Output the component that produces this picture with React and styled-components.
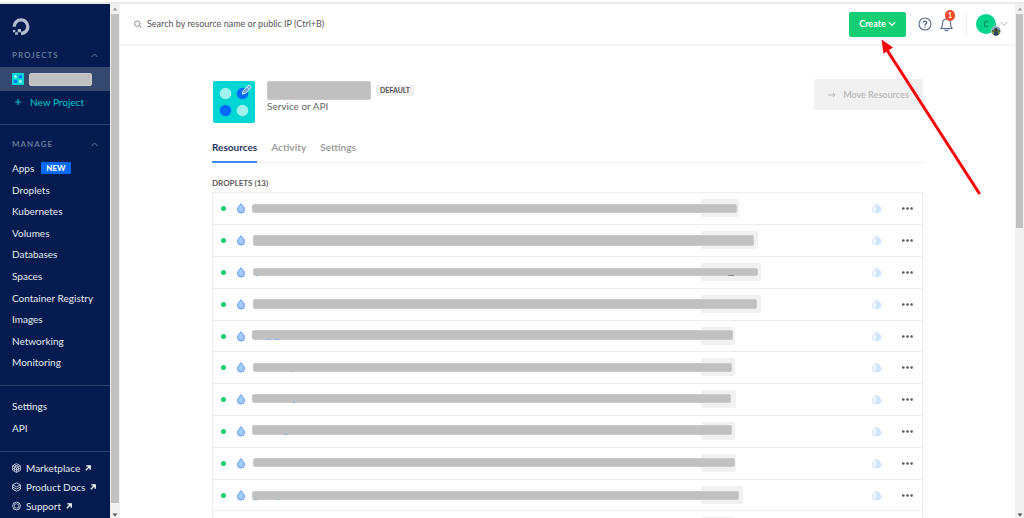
import React from "react";
import styled, { createGlobalStyle } from "styled-components";

const GlobalStyle = createGlobalStyle`
  *, *::before, *::after { box-sizing: border-box; }
  body {
    margin: 0;
    background: #fff;
    color: #5b5b5b;
    font-family: Lato, "Open Sans", "Liberation Sans", sans-serif;
    font-size: 10px;
    line-height: 16px;
  }
  button, input { font: inherit; }
  a { color: inherit; text-decoration: none; }
  ul { list-style: none; margin: 0; padding: 0; }
  h1, h2, p { margin: 0; font-size: inherit; }
`;

const Shell = styled.div`
  position: relative;
  display: flex;
  height: 100vh;
  overflow: hidden;
  border-top: 2px solid #fff;
  box-shadow: inset 0 2px 0 #e9e9e9;
  padding-top: 2px;
`;

const Sidebar = styled.aside`
  flex: 0 0 110px;
  overflow: hidden;
  background: #031b4e;
  color: #e6e9ef;
`;

const LogoLink = styled.a`
  display: block;
  height: 18px;
  margin: 14px 12px 11px;
  svg { display: block; }
`;

const NavHeading = styled.button`
  display: flex;
  align-items: center;
  justify-content: space-between;
  width: 100%;
  height: 16px;
  padding: 0 12px;
  border: 0;
  background: none;
  color: #67779a;
  font-size: 8px;
  font-weight: 700;
  letter-spacing: 1px;
  text-transform: uppercase;
`;

const ProjectLink = styled.a`
  display: flex;
  align-items: center;
  gap: 5px;
  height: 24px;
  margin-top: 4px;
  padding: 0 12px;
  background: #35486f;
`;

const Redacted = styled.span`
  display: block;
  width: ${(p) => p.$width}px;
  height: ${(p) => p.$height}px;
  border: 1px solid #cbcbcb;
  border-radius: 2px;
  background: #c0c0c0;
`;

const NewProject = styled.a`
  display: flex;
  align-items: center;
  gap: 8px;
  height: 22px;
  padding: 0 14px;
  color: #00c7cb;
`;

const Divider = styled.hr`
  height: 1px;
  margin: ${(p) => p.$before}px 0 ${(p) => p.$after}px;
  border: 0;
  background: #27406c;
`;

const NavList = styled.ul`
  display: grid;
  grid-auto-rows: 22px 21px 22px 21px 22px;
  padding: 0 12px;
  margin-top: ${(p) => p.$top || 0}px;
  a { display: flex; align-items: center; gap: 7px; height: 100%; white-space: nowrap; }
`;

const NewBadge = styled.span`
  padding: 0 5px;
  border-radius: 1px;
  background: #0069ff;
  color: #fff;
  font-size: 8px;
  font-weight: 900;
  line-height: 12px;
`;

const ResourceList = styled.ul`
  padding: 0 12px;
  a { display: flex; align-items: center; gap: 5px; height: 19px; white-space: nowrap; }
`;

const ScrollTrack = styled.div`
  display: flex;
  flex: 0 0 ${(p) => p.$width}px;
  flex-direction: column;
  align-items: center;
  padding: 3px 1px 1px;
  background: #f0f0f0;
  svg { flex: none; display: block; }
`;

const ScrollThumb = styled.div`
  align-self: stretch;
  flex: 0 0 ${(p) => p.$size};
  margin: 3px 0 auto;
  background: #c1c1c1;
`;

const Main = styled.main`
  flex: 1;
  min-width: 0;
`;

const TopBar = styled.header`
  display: flex;
  align-items: center;
  height: 41px;
  padding: 0 7px 0 14px;
  border-bottom: 1px solid #f3f3f3;
  box-shadow: 0 1px 2px #f6f6f6;
`;

const Search = styled.label`
  display: flex;
  flex: 1;
  align-items: center;
  gap: 5px;
  font-size: 9px;
  input {
    flex: 1;
    min-width: 0;
    padding: 0;
    border: 0;
    outline: 0;
    background: none;
    color: #555;
  }
  input::placeholder { color: #555; opacity: 1; }
`;

const CreateButton = styled.button`
  display: flex;
  align-items: center;
  justify-content: center;
  gap: 2px;
  width: 57px;
  height: 25px;
  padding: 0;
  border: 0;
  border-radius: 2px;
  background: #15cd72;
  color: #fff;
  font-size: 9px;
  font-weight: 700;
`;

const IconButton = styled.button`
  position: relative;
  display: flex;
  margin-left: ${(p) => p.$gap}px;
  padding: 0;
  border: 0;
  background: none;
`;

const AlertCount = styled.span`
  position: absolute;
  top: -7px;
  right: -2px;
  width: 10px;
  height: 11px;
  border-radius: 5px;
  background: #ee4b2f;
  color: #fff;
  font-size: 7px;
  font-weight: 700;
  line-height: 11px;
  text-align: center;
`;

const BarSeparator = styled.span`
  width: 1px;
  height: 23px;
  margin-left: 13px;
  background: #efefef;
`;

const Account = styled.button`
  display: flex;
  align-items: center;
  gap: 4px;
  margin-left: 9px;
  padding: 0;
  border: 0;
  background: none;
`;

const Avatar = styled.span`
  position: relative;
  width: 20px;
  height: 20px;
  border-radius: 50%;
  background: #00d68b;
  color: #0a5c47;
  font-size: 7px;
  line-height: 20px;
  text-align: center;
  svg { position: absolute; right: -5px; bottom: -2px; }
`;

const Content = styled.div`
  max-width: 711px;
  margin: 0 auto;
  padding-top: 34px;
`;

const ProjectHeader = styled.section`
  display: flex;
  align-items: flex-start;
  height: 52px;
`;

const ProjectIcon = styled.div`
  display: flex;
  margin: 2px 12px 0 1px;
`;

const ProjectInfo = styled.div`
  flex: 1;
  padding-top: 2px;
  p { line-height: 12px; color: #676767; }
`;

const TitleLine = styled.div`
  display: flex;
  align-items: center;
  gap: 5px;
`;

const DefaultTag = styled.span`
  padding: 0 4px;
  border-radius: 2px;
  background: #efefef;
  color: #5b5b5b;
  font-size: 7px;
  font-weight: 700;
  line-height: 11px;
`;

const MoveButton = styled.button`
  display: flex;
  align-items: center;
  justify-content: center;
  gap: 7px;
  width: 109px;
  height: 31px;
  padding: 0;
  border: 0;
  border-radius: 2px;
  background: #f1f1f1;
  color: #bdbdbd;
  font-size: 9px;
  font-weight: 700;
`;

const Tabs = styled.nav`
  display: flex;
  gap: 14px;
  height: 32px;
  box-shadow: inset 0 -1px 0 #f1f1f1;
`;

const Tab = styled.a`
  padding-top: 8px;
  border-bottom: 2px solid ${(p) => (p.$active ? "#3c86fb" : "transparent")};
  color: ${(p) => (p.$active ? "#1f3561" : "#a0a0a0")};
  font-weight: 700;
`;

const ListHeading = styled.h2`
  margin: 12px 0 1px;
  font-size: 8px;
  line-height: 16px;
`;

const DropletList = styled.ul`
  display: grid;
  grid-auto-rows: 32px 32px 32px 32px 31px;
  border: 1px solid #ededed;
`;

const DropletRow = styled.li`
  display: grid;
  grid-template-columns: 6px 8px 1fr 21px 11px;
  column-gap: 10px;
  align-items: center;
  padding: 0 9px 0 8px;
  border-bottom: 1px solid #ececec;
`;

const StatusDot = styled.span`
  width: 5px;
  height: 5px;
  border-radius: 50%;
  background: #15cd72;
`;

const NameCell = styled.div`
  display: grid;
  align-self: start;
  height: 31px;
  margin-left: -3px;
  > * { grid-area: 1 / 1; }
`;

const IpTag = styled.span`
  width: ${(p) => p.$width}px;
  height: 18px;
  margin: 6px 0 0 449px;
  border-radius: 2px;
  background: #f1f1f1;
`;

const NameBar = styled(Redacted)`
  position: relative;
  margin: ${(p) => p.$top}px 0 0 ${(p) => p.$inset || 0}px;
`;

const Descender = styled.i`
  position: absolute;
  top: 100%;
  left: ${(p) => p.$at}px;
  width: ${(p) => p.$width}px;
  height: 1px;
  background: ${(p) => p.$color || "#7aaef8"};
`;

const RowButton = styled.button`
  display: flex;
  padding: 0;
  border: 0;
  background: none;
`;

const Pointer = styled.svg`
  position: absolute;
  top: 37px;
  right: 42px;
  pointer-events: none;
`;

const Chevron = ({ color, width = 1 }) => (
  <svg width="8" height="6" viewBox="0 0 8 6" fill="none" stroke={color} strokeWidth={width}>
    <path d="M.8 1.200 4 4.400 7.200 1.200" />
  </svg>
);

const ChevronUp = () => (
  <svg width="7" height="5" viewBox="0 0 7 5" fill="none" stroke="#67779a">
    <path d="M.5 4 3.5 1 6.5 4" />
  </svg>
);

const Triangle = ({ down, color }) => (
  <svg width="6" height="4" viewBox="0 0 6 4" fill={color}>
    <path d={down ? "M.5 .5h5L3 3.5z" : "M.5 3.5h5L3 .5z"} />
  </svg>
);

const ProjectGlyph = ({ size, edit }) => (
  <svg width={size} height={size} viewBox="0 0 42 42">
    <rect width="42" height="42" rx="2" fill="#00d7d2" />
    <circle cx="12.500" cy="12.500" r="5.800" fill="#a0f2ec" />
    <circle cx="29.500" cy="12.500" r="5.800" fill="#0069ff" />
    <circle cx="12.500" cy="29.500" r="5.800" fill="#0069ff" />
    <circle cx="29.500" cy="29.500" r="5.800" fill="#a0f2ec" />
    {edit && (
      <g fill="#6fa5d6" stroke="#e6f3fb" strokeWidth="1" strokeLinejoin="round">
        <path d="M29.200 13.200 30.200 9.600 35 4.800a1.300 1.300 0 0 1 2 0l.5.5a1.300 1.300 0 0 1 0 2L32.700 12.100z" />
        <path d="M34 5.800l2.500 2.500" strokeWidth=".7" />
      </g>
    )}
  </svg>
);

const Logo = () => (
  <svg width="18" height="18" viewBox="0 0 18 18">
    <path d="M9 15.500A6.800 6.800 0 1 0 2.200 8.700" fill="none" stroke="#b4bdcd" strokeWidth="3.400" />
    <path d="M5.700 10.900H9v3.400H5.700zM3.200 14.200h2.600v2.600H3.200zM1 12h2.300v2.200H1z" fill="#b4bdcd" />
  </svg>
);

const ExternalArrow = () => (
  <svg width="6" height="6" viewBox="0 0 6 6" fill="none" stroke="#fff" strokeWidth="1.300">
    <path d="M.8 5.200 5 1M1.300 .9h3.900v3.900" />
  </svg>
);

const CubeIcon = () => (
  <svg width="9" height="10" viewBox="0 0 9 10" fill="none" stroke="#d0d6e2" strokeWidth=".8" strokeLinejoin="round">
    <path d="M4.500 .6 8.400 2.700v4.600L4.500 9.400.6 7.300V2.700zM.6 2.700l3.900 2.200 3.900-2.200M4.500 4.900v4.500M2.500 1.700l3.900 2.100v4.500M6.500 1.700 2.600 3.800v4.500M.6 5l3.900 2.200L8.400 5" />
  </svg>
);

const LayersIcon = () => (
  <svg width="9" height="10" viewBox="0 0 9 10" fill="none" stroke="#d0d6e2" strokeWidth=".9" strokeLinejoin="round">
    <path d="M4.500 .8 8.400 2.800 4.500 4.900.6 2.800zM.6 2.800v4.400l3.900 2.100 3.900-2.100V2.800M.6 5l3.900 2.100L8.400 5" />
  </svg>
);

const SupportIcon = () => (
  <svg width="9" height="10" viewBox="0 0 9 10" fill="none" stroke="#d0d6e2">
    <circle cx="4.500" cy="5" r="3.900" strokeWidth=".9" />
    <circle cx="4.500" cy="5" r="2.300" strokeWidth=".7" />
    <path d="M1.700 2.200 2.900 3.400M7.300 2.200 6.100 3.400M1.700 7.800l1.200-1.200M7.300 7.800 6.100 6.600" strokeWidth=".8" />
  </svg>
);

const SearchIcon = () => (
  <svg width="8" height="9" viewBox="0 0 8 9" fill="none" stroke="#7d7d7d" strokeWidth=".9">
    <circle cx="3.300" cy="3.700" r="2.700" />
    <path d="M5.300 5.700 7.800 8.300" />
  </svg>
);

const HelpIcon = () => (
  <svg width="14" height="14" viewBox="0 0 14 14" fill="none" stroke="#596a91">
    <circle cx="7" cy="7" r="6" strokeWidth="1.100" />
    <path d="M5.200 5.700C5.200 3.500 8.800 3.500 8.800 5.600 8.800 6.900 7 6.900 7 8.400" strokeWidth="1.300" />
    <circle cx="7" cy="10" r=".8" fill="#596a91" stroke="none" />
  </svg>
);

const BellIcon = () => (
  <svg width="13" height="15" viewBox="0 0 13 15" fill="none" stroke="#596a91" strokeWidth="1.100" strokeLinejoin="round">
    <path d="M.8 11.500C2.300 10.300 2.500 9 2.500 6.500 2.500 3.700 4.200 2 6.500 2s4 1.700 4 4.500c0 2.500.2 3.800 1.700 5z" />
    <path d="M4.800 12.300c.3 2 3.100 2 3.400 0" />
  </svg>
);

const PhotoBadge = () => (
  <svg width="10" height="10" viewBox="0 0 10 10">
    <circle cx="5" cy="5" r="5" fill="#fff" />
    <circle cx="5" cy="5" r="4.500" fill="#4f6a3a" />
    <path d="M.7 4A4.500 4.500 0 0 1 9.300 4z" fill="#7ea3c8" />
    <path d="M2.800 9c0-4.600 4.400-4.600 4.400 0a4.500 4.500 0 0 1-4.400 0z" fill="#2b3f73" />
    <circle cx="5" cy="3.400" r="1.500" fill="#3a2b26" />
    <path d="M1 6.200h2v2zM7.300 6.200H9L8 8.300z" fill="#b8b545" />
  </svg>
);

const DropletIcon = () => (
  <svg width="8" height="11" viewBox="0 0 8 11">
    <path d="M4 .8C5.200 2.700 7.500 4.200 7.500 6.500a3.500 3.500 0 0 1-7 0C.5 4.200 2.800 2.700 4 .8z" fill="#a8cbfb" stroke="#5b9bf8" strokeWidth="1" />
  </svg>
);

const DoubleDroplet = () => (
  <svg width="12" height="11" viewBox="0 0 12 11">
    <path d="M7 .8c1.200 1.900 3.700 3.300 3.700 5.600A3.600 3.600 0 0 1 7 10z" fill="#d9e8fc" />
    <path d="M5 .8C6.200 2.700 8.500 4.100 8.500 6.400a3.500 3.500 0 0 1-7 0C1.500 4.100 3.800 2.700 5 .8z" fill="#f4f9ff" stroke="#bfd8fb" strokeWidth=".8" />
    <path d="M5 1.300C6.200 2.900 8.100 4.300 8.100 6.400A3.200 3.200 0 0 1 5 9.500z" fill="#cfe1fc" />
  </svg>
);

const MoreIcon = () => (
  <svg width="11" height="3" viewBox="0 0 11 3" fill="#5f5f5f">
    <rect width="2.600" height="2.600" y=".2" rx="1" />
    <rect width="2.600" height="2.600" x="4.200" y=".2" rx="1" />
    <rect width="2.600" height="2.600" x="8.300" y=".2" rx="1" />
  </svg>
);

const manageLinks = ["Apps", "Droplets", "Kubernetes", "Volumes", "Databases", "Spaces", "Container Registry", "Images", "Networking", "Monitoring"];

const externalLinks = [
  ["Marketplace", CubeIcon],
  ["Product Docs", LayersIcon],
  ["Support", SupportIcon],
];

const droplets = [
  { bar: 485, height: 9, top: 11, tag: 38 },
  { bar: 501, height: 11, top: 10, tag: 57, inset: 1 },
  { bar: 505, height: 8, top: 11, tag: 60, inset: 1, marks: [[2, 2], [474, 6, "#888"]] },
  { bar: 504, height: 10, top: 10, tag: 60, inset: 1 },
  { bar: 481, height: 10, top: 9, tag: 34, marks: [[13, 2], [16, 2], [22, 4]] },
  { bar: 479, height: 9, top: 11, tag: 34, inset: 1, marks: [[37, 2]] },
  { bar: 479, height: 9, top: 10, tag: 35, marks: [[40, 2]] },
  { bar: 480, height: 10, top: 9, tag: 34, marks: [[31, 3]] },
  { bar: 482, height: 9, top: 10, tag: 35, inset: 1 },
  { bar: 487, height: 9, top: 11, tag: 42, marks: [[1, 3], [24, 2]] },
  { bar: 480, height: 9, top: 11, tag: 34 },
  { bar: 480, height: 9, top: 11, tag: 34 },
  { bar: 480, height: 9, top: 11, tag: 34 },
];

export default function App() {
  return (
    <>
      <GlobalStyle />
      <Shell>
        <Sidebar>
          <LogoLink href="#" aria-label="Home"><Logo /></LogoLink>
          <NavHeading>Projects <ChevronUp /></NavHeading>
          <ProjectLink href="#" aria-label="Current project">
            <ProjectGlyph size={12} />
            <Redacted $width={63} $height={13} />
          </ProjectLink>
          <NewProject href="#">
            <svg width="8" height="8" viewBox="0 0 8 8" stroke="#00c7cb" strokeWidth="1.200">
              <path d="M4 1v6M1 4h6" />
            </svg>
            New Project
          </NewProject>
          <Divider $before={11} $after={11} />
          <NavHeading>Manage <ChevronUp /></NavHeading>
          <NavList $top={5}>
            {manageLinks.map((name) => (
              <li key={name}>
                <a href="#">{name}{name === "Apps" && <NewBadge>NEW</NewBadge>}</a>
              </li>
            ))}
          </NavList>
          <Divider $before={12} $after={9} />
          <NavList>
            <li><a href="#">Settings</a></li>
            <li><a href="#">API</a></li>
          </NavList>
          <Divider $before={13} $after={6} />
          <ResourceList>
            {externalLinks.map(([name, Icon]) => (
              <li key={name}><a href="#"><Icon />{name}<ExternalArrow /></a></li>
            ))}
          </ResourceList>
        </Sidebar>
        <ScrollTrack $width={10}>
          <Triangle color="#a3a3a3" />
          <ScrollThumb $size="calc(100% - 21px)" />
          <Triangle down color="#505050" />
        </ScrollTrack>
        <Main>
          <TopBar>
            <Search>
              <SearchIcon />
              <input type="search" aria-label="Search" placeholder="Search by resource name or public IP (Ctrl+B)" />
            </Search>
            <CreateButton>Create <Chevron color="#fff" width={1.2} /></CreateButton>
            <IconButton $gap={12} aria-label="Help"><HelpIcon /></IconButton>
            <IconButton $gap={8} aria-label="Notifications"><BellIcon /><AlertCount>1</AlertCount></IconButton>
            <BarSeparator />
            <Account aria-label="Account">
              <Avatar>C<PhotoBadge /></Avatar>
              <Chevron color="#a3adc0" />
            </Account>
          </TopBar>
          <Content>
            <ProjectHeader>
              <ProjectIcon><ProjectGlyph size={42} edit /></ProjectIcon>
              <ProjectInfo>
                <TitleLine>
                  <Redacted $width={104} $height={19} />
                  <DefaultTag>DEFAULT</DefaultTag>
                </TitleLine>
                <p>Service or API</p>
              </ProjectInfo>
              <MoveButton disabled>
                <svg width="8" height="6" viewBox="0 0 8 6" fill="none" stroke="#b5b5b5">
                  <path d="M0 3h7M5 1l2 2-2 2" />
                </svg>
                Move Resources
              </MoveButton>
            </ProjectHeader>
            <Tabs>
              <Tab href="#" $active>Resources</Tab>
              <Tab href="#">Activity</Tab>
              <Tab href="#">Settings</Tab>
            </Tabs>
            <ListHeading>DROPLETS (13)</ListHeading>
            <DropletList>
              {droplets.map((d, i) => (
                <DropletRow key={i}>
                  <StatusDot />
                  <DropletIcon />
                  <NameCell>
                    <IpTag $width={d.tag} />
                    <NameBar $width={d.bar} $height={d.height} $top={d.top} $inset={d.inset}>
                      {(d.marks || []).map(([at, width, color]) => (
                        <Descender key={at} $at={at} $width={width} $color={color} />
                      ))}
                    </NameBar>
                  </NameCell>
                  <DoubleDroplet />
                  <RowButton aria-label="More actions"><MoreIcon /></RowButton>
                </DropletRow>
              ))}
            </DropletList>
          </Content>
        </Main>
        <ScrollTrack $width={9}>
          <Triangle color="#a3a3a3" />
          <ScrollThumb $size="42%" />
          <Triangle down color="#505050" />
        </ScrollTrack>
        <Pointer width="106" height="160" viewBox="876 39 106 160">
          <path d="M887 50 979 193" stroke="#fb0007" strokeWidth="3" strokeLinecap="round" />
          <path d="M881.500 39.500 893 47.500 883.500 53.500z" fill="#fb0007" />
        </Pointer>
      </Shell>
    </>
  );
}
